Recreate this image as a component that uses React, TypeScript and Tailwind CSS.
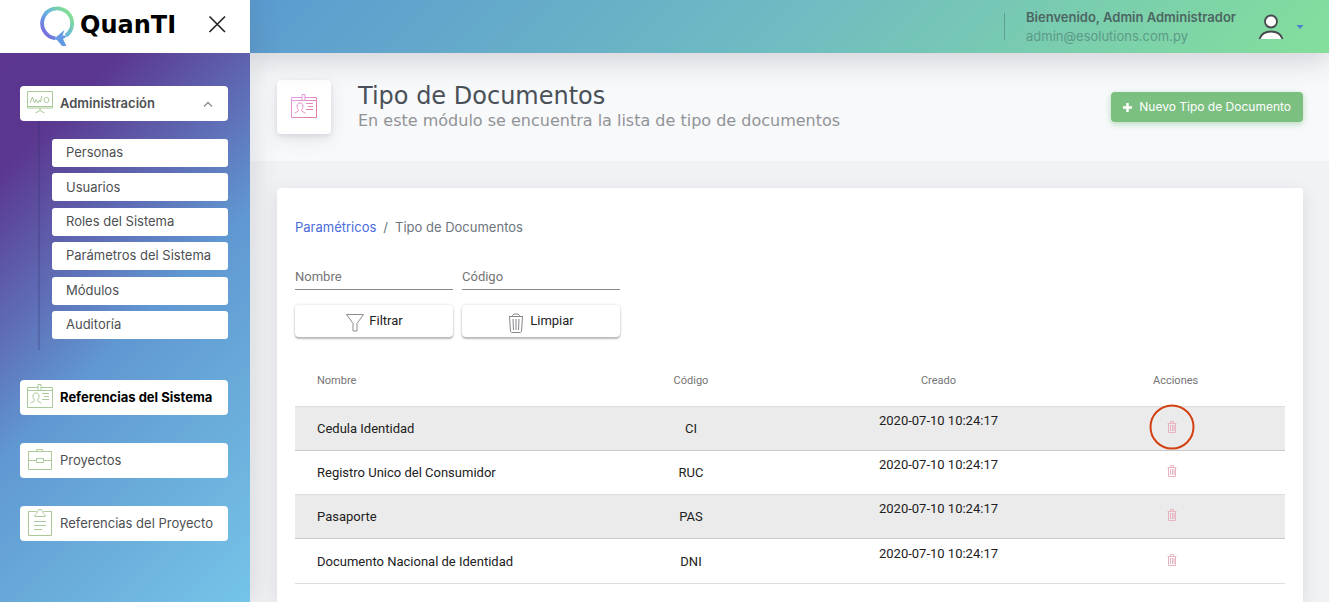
import type { ReactNode } from "react";

type IconProps = { className?: string };

function BoardIcon({ className }: IconProps) {
  return (
    <svg viewBox="0 1 26 27" fill="none" stroke="currentColor" className={className} aria-hidden="true">
      <path d="M.5 2.500h25v16.500H.5zM.5 17.500h25M13 19v3M13 21.500l-4.500 2.500M13 21.500l4.500 2.500" />
      <path d="M3 14l2.500-6 2 6 1.500-3.500 2 3.500 1.500-3 .8 2L15 7" />
      <circle cx="19.500" cy="11" r="2.500" />
    </svg>
  );
}

function IdIcon({ className, stroke = "currentColor" }: IconProps & { stroke?: string }) {
  return (
    <svg viewBox="0 1 26 27" fill="none" stroke={stroke} className={className} aria-hidden="true">
      <defs>
        <linearGradient id="idStroke" gradientUnits="userSpaceOnUse" x1="0" y1="0" x2="26" y2="26">
          <stop stopColor="#dc8cf2" />
          <stop offset="1" stopColor="#dc5475" />
        </linearGradient>
      </defs>
      <path d="M11 4.500H.5v20h25v-20H14M.5 7.500H11M14 7.500h11.500" />
      <path d="M11 1.500h3v6h-3z" />
      <path d="M3.500 20.500c.5-1.500 4-1.500 4-3 0-1-1.500-2-1.500-4.500 0-2 1-3 3-3s3 1 3 3c0 2.500-1.500 3.500-1.500 4.500 0 1.500 3.500 1.500 4 3" />
      <path d="M15 10.500h7M17 13.500h5M15 16.500h7" />
    </svg>
  );
}

function BriefcaseIcon({ className }: IconProps) {
  return (
    <svg viewBox="0 1 26 27" fill="none" stroke="currentColor" className={className} aria-hidden="true">
      <path d="M1.500 5.500h23v18h-23zM9.500 5.500v-2h6v2M1.500 14.500h8M16.500 14.500h8M9.500 12.500h7v4h-7z" />
    </svg>
  );
}

function ClipboardIcon({ className }: IconProps) {
  return (
    <svg viewBox="0 1 26 29" fill="none" stroke="currentColor" className={className} aria-hidden="true">
      <path d="M9.500 3.500h-8v24h23v-24h-8" />
      <path d="M7.500 8.500c0-2 2.200-2 2.700-4 .3-2 1.300-3 2.800-3s2.500 1 2.800 3c.5 2 2.700 2 2.700 4z" />
      <path d="M7 13.500h12M7 17.500h12M7 21.500h8" />
    </svg>
  );
}

function TrashIcon({ className }: IconProps) {
  return (
    <svg viewBox="0 0 16 20" fill="none" stroke="currentColor" className={className} aria-hidden="true">
      <path d="M1 3.500h14M4.500 3.500v-1l1.500-1.500h4l1.500 1.500v1M1.500 3.500l1 15 1 1h9l1-1 1-15M5 6l.5 11M8 6v11M11 6l-.5 11" />
    </svg>
  );
}

function SmallTrashIcon({ className }: IconProps) {
  return (
    <svg viewBox="0 0 10 12" fill="none" stroke="currentColor" className={className} aria-hidden="true">
      <path d="M.5 2.500h9M3.500 2.500v-2h3v2M1.500 2.500v9h7v-9M3.500 4v6M5.500 4v6M7 4v6" />
    </svg>
  );
}

function FunnelIcon({ className }: IconProps) {
  return (
    <svg viewBox="0 0 20 20" fill="none" stroke="currentColor" className={className} aria-hidden="true">
      <path d="M1.500 1.500h17l-6.500 9v7.500H8v-7.500z" />
    </svg>
  );
}

function Logo() {
  return (
    <a href="#" className="flex items-center gap-1.5 text-black">
      <svg viewBox="0 0 34 41" className="h-[41px] w-[34px]" fill="none" aria-hidden="true">
        <defs>
          <linearGradient id="ring" gradientUnits="userSpaceOnUse" x1="4" y1="30" x2="30" y2="8">
            <stop stopColor="#7a63dd" />
            <stop offset=".5" stopColor="#62b2e2" />
            <stop offset="1" stopColor="#84e094" />
          </linearGradient>
        </defs>
        <path d="M26 29.500A15 15 0 1 0 15.500 32.300" stroke="url(#ring)" strokeWidth="3.800" />
        <path d="M14.500 32.500L24.500 24l-2 5.500 5 .3-4.500 3.200 3.500 7h-4.500l-4.500-5.500z" fill="#6398e2" />
      </svg>
      <span className="pb-1 font-['DejaVu_Sans',sans-serif] text-2xl leading-8 font-bold">QuanTI</span>
    </a>
  );
}

const submenu = [
  "Personas",
  "Usuarios",
  "Roles del Sistema",
  "Parámetros del Sistema",
  "Módulos",
  "Auditoría",
];

const rows = [
  { nombre: "Cedula Identidad", codigo: "CI", creado: "2020-07-10 10:24:17", marked: true },
  { nombre: "Registro Unico del Consumidor", codigo: "RUC", creado: "2020-07-10 10:24:17" },
  { nombre: "Pasaporte", codigo: "PAS", creado: "2020-07-10 10:24:17" },
  { nombre: "Documento Nacional de Identidad", codigo: "DNI", creado: "2020-07-10 10:24:17" },
];

function NavLink({ icon, active, children }: { icon: ReactNode; active?: boolean; children: ReactNode }) {
  return (
    <a
      href="#"
      className={`flex h-[35px] items-center gap-[7px] rounded bg-white pl-[7px] text-[13px] ${
        active ? "font-bold text-black" : "text-[#4d4f52]"
      }`}
    >
      <span className="text-[#abc89b]">{icon}</span>
      {children}
    </a>
  );
}

function Sidebar() {
  return (
    <aside className="z-20 flex w-[250px] shrink-0 flex-col shadow-[6px_0_24px_rgba(60,60,70,0.12)]">
      <div className="flex h-[53px] items-center justify-between bg-white pr-6 pl-[40px]">
        <Logo />
        <button type="button" aria-label="Cerrar menú" className="pb-1.5">
          <svg viewBox="0 0 18 18" className="size-[18px]" fill="none" stroke="#222" strokeWidth="1.600" aria-hidden="true">
            <path d="M1.500 1.500l15.500 15.500M17 1.500L1.500 17" />
          </svg>
        </button>
      </div>
      <nav className="flex-1 bg-[linear-gradient(135deg,#5b358f_0%,#5b378f_15%,#5f74ba_38%,#6098d1_51%,#75c4e8_100%)] pt-[33px] pr-[22px] pl-5">
        <button
          type="button"
          aria-expanded="true"
          className="flex h-[35px] w-full items-center gap-[7px] rounded bg-white pr-[14px] pl-[7px] text-[13px] font-semibold text-[#4d4f52]"
        >
          <BoardIcon className="h-[27px] w-[26px] text-[#abc89b]" />
          <span>Administración</span>
          <svg viewBox="0 0 12 8" className="ml-auto h-2 w-3" fill="none" stroke="#8d8f92" strokeWidth="1.400" aria-hidden="true">
            <path d="M2 6.500l4-4 4 4" />
          </svg>
        </button>
        <div className="mb-[30px] ml-[18px] border-l-2 border-[#30306a]/25 pt-[18px] pb-[11px] pl-3">
          <ul className="flex h-[200px] flex-col justify-between">
            {submenu.map((label) => (
              <li key={label}>
                <a href="#" className="flex h-7 items-center rounded-[3px] bg-white pl-[14px] text-[13px] text-[#4d4f52]">
                  {label}
                </a>
              </li>
            ))}
          </ul>
        </div>
        <div className="flex flex-col gap-7">
          <NavLink active icon={<IdIcon className="h-[27px] w-[26px]" />}>
            Referencias del Sistema
          </NavLink>
          <NavLink icon={<BriefcaseIcon className="h-[27px] w-[26px]" />}>Proyectos</NavLink>
          <NavLink icon={<ClipboardIcon className="h-[29px] w-[26px]" />}>Referencias del Proyecto</NavLink>
        </div>
      </nav>
    </aside>
  );
}

function Header() {
  return (
    <header className="z-10 flex h-[53px] items-center justify-end bg-[linear-gradient(135deg,#5b9bd1_0%,#6fbcc2_50%,#84df9b_100%)] pr-[25px] shadow-[0_8px_28px_rgba(60,60,80,0.2)]">
      <div className="flex h-[27px] items-center border-l border-black/20 pl-[21px]">
        <div>
          <p className="text-[13px] leading-[19px] font-semibold text-[#4c6663]">Bienvenido, Admin Administrador</p>
          <p className="text-[13px] leading-[19px] text-[#5c9a88]">admin@esolutions.com.py</p>
        </div>
      </div>
      <button type="button" aria-label="Cuenta" className="ml-[22px] flex items-center gap-3">
        <svg viewBox="0 0 26 28" className="h-7 w-[26px]" fill="#fff" stroke="#47494f" strokeWidth="1.800" aria-hidden="true">
          <circle cx="13" cy="8.500" r="6" />
          <path d="M1.500 26c1.500-4.500 6-7.500 11.500-7.500s10 3 11.500 7.500" />
        </svg>
        <svg viewBox="0 0 8 4" className="h-1 w-2" fill="#4f7fd0" aria-hidden="true">
          <path d="M.5 0h7L4 4z" />
        </svg>
      </button>
    </header>
  );
}

function PageTitle() {
  return (
    <div className="flex items-center gap-[27px] bg-[#f8f9fb] py-[27px] pr-[26px] pl-[27px]">
      <div className="flex size-[54px] items-center justify-center rounded bg-white pt-px shadow-[0_6px_18px_rgba(60,60,80,0.1),0_2px_5px_rgba(60,60,80,0.12)]">
        <IdIcon className="h-[27px] w-[26px] opacity-80" stroke="url(#idStroke)" />
      </div>
      <div className="font-['DejaVu_Sans',sans-serif]">
        <h1 className="text-2xl leading-7 text-[#495057]">Tipo de Documentos</h1>
        <p className="text-base leading-[22px] text-[#919396]">
          En este módulo se encuentra la lista de tipo de documentos
        </p>
      </div>
      <button
        type="button"
        className="ml-auto flex h-[30px] items-center gap-[7px] rounded bg-[#7cc081] px-3 text-xs text-white shadow-[0_2px_6px_rgba(100,180,110,0.45)]"
      >
        <svg viewBox="0 0 9 9" className="size-[9px]" stroke="#fff" strokeWidth="2.400" aria-hidden="true">
          <path d="M4.500 0v9M0 4.500h9" />
        </svg>
        Nuevo Tipo de Documento
      </button>
    </div>
  );
}

const inputClass =
  "h-[26px] w-[158px] border-b border-[#8a8a8a] bg-transparent text-[13px] text-[#212121] outline-none placeholder:text-[#757575]";
const filterButtonClass =
  "flex h-8 w-[158px] items-center justify-center gap-1 rounded bg-white text-[13px] text-[#212121] shadow-[0_2px_2px_rgba(0,0,0,0.25),0_0_3px_rgba(0,0,0,0.15)]";

function Filters() {
  return (
    <form className="mt-[27px] grid grid-cols-[158px_158px] gap-x-[9px] gap-y-[15px] font-[Roboto,sans-serif]">
      <input type="text" aria-label="Nombre" placeholder="Nombre" className={inputClass} />
      <input type="text" aria-label="Código" placeholder="Código" className={inputClass} />
      <button type="button" className={filterButtonClass}>
        <FunnelIcon className="mt-1 size-5 text-[#8b8b90]" />
        Filtrar
      </button>
      <button type="button" className={filterButtonClass}>
        <TrashIcon className="mt-1 mr-0.5 h-5 w-4 text-[#85858a]" />
        Limpiar
      </button>
    </form>
  );
}

function DocumentTable() {
  return (
    <table className="mt-4 w-full table-fixed border-collapse font-[Roboto,sans-serif] text-[13px] text-[#212121]">
      <colgroup>
        <col className="w-[27.5%]" />
        <col className="w-[25%]" />
        <col className="w-[25%]" />
        <col className="w-[22.5%]" />
      </colgroup>
      <thead>
        <tr className="h-[53px] border-b border-[#dedede] text-[11px] text-[#757575]">
          <th scope="col" className="pt-1 pl-[22px] text-left font-normal">Nombre</th>
          <th scope="col" className="pt-1 font-normal">Código</th>
          <th scope="col" className="pt-1 font-normal">Creado</th>
          <th scope="col" className="pt-1 pl-1 font-normal">Acciones</th>
        </tr>
      </thead>
      <tbody>
        {rows.map((row) => (
          <tr
            key={row.nombre}
            className="h-11 border-b border-[#dedede] text-center last:h-[45px] odd:border-[#cacaca] odd:bg-[#ebebeb]"
          >
            <td className="pt-0.5 pl-[22px] text-left">{row.nombre}</td>
            <td className="pt-0.5">{row.codigo}</td>
            <td className="pb-[14px]">{row.creado}</td>
            <td className="pr-1 pb-0.5">
              <button type="button" aria-label={`Eliminar ${row.nombre}`} className="relative mx-auto block text-[#e8b4c0]">
                <SmallTrashIcon className="h-3 w-[10px]" />
                {row.marked && (
                  <span className="absolute top-1/2 left-1/2 size-[45px] -translate-1/2 rounded-full border-2 border-[#d33f10]" />
                )}
              </button>
            </td>
          </tr>
        ))}
      </tbody>
    </table>
  );
}

export default function App() {
  return (
    <div className="flex min-h-screen bg-[#f1f2f4] font-[Inter,sans-serif]">
      <Sidebar />
      <div className="flex min-w-0 flex-1 flex-col">
        <Header />
        <main className="flex flex-1 flex-col">
          <PageTitle />
          <section className="mt-[27px] mr-[26px] ml-[27px] flex-1 rounded-t bg-white px-[18px] pt-[29px] shadow-[0_4px_16px_rgba(60,60,80,0.12)]">
            <nav aria-label="Ruta" className="flex gap-[7px] text-[13px] leading-5 text-[#6c757d]">
              <a href="#" className="text-[#4a6bdc]">Paramétricos</a>
              <span>/</span>
              <span>Tipo de Documentos</span>
            </nav>
            <Filters />
            <DocumentTable />
          </section>
        </main>
      </div>
    </div>
  );
}
